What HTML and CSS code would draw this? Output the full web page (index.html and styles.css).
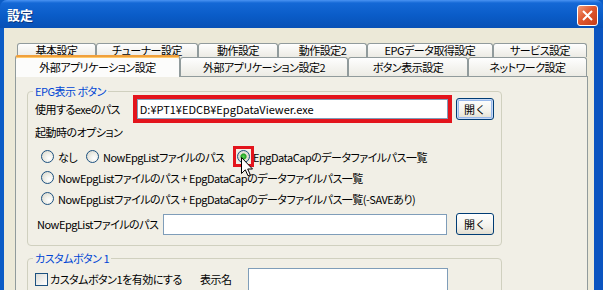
FILE: index.html
```html
<!DOCTYPE html>
<html lang="ja">
<head>
    <meta charset="UTF-8">
    <title>設定</title>
    <link rel="stylesheet" href="styles.css">
</head>
<body>
    <div class="window">
        <div class="titlebar">
            <span class="title">設定</span>
            <span class="close">
                <svg width="11" height="11" viewBox="0 0 11 11"><path d="M1 1L10 10M10 1L1 10" stroke="#fff" stroke-width="2" fill="none"/></svg>
            </span>
        </div>
        <div class="client">
            <div class="tabrow back">
                <div class="tab w-kihon">基本設定</div>
                <div class="tab w-tuner">チューナー設定</div>
                <div class="tab w-dosa">動作設定</div>
                <div class="tab w-dosa2">動作設定2</div>
                <div class="tab w-epg">EPGデータ取得設定</div>
                <div class="tab w-service">サービス設定</div>
            </div>
            <div class="tabrow front">
                <div class="tab selected w-ext">外部アプリケーション設定</div>
                <div class="tab w-ext2">外部アプリケーション設定2</div>
                <div class="tab w-button">ボタン表示設定</div>
                <div class="tab w-network">ネットワーク設定</div>
            </div>
            <div class="panel">
                <div class="group">
                    <div class="group-title">EPG表示 ボタン</div>
                    <div class="path-row">
                        <span class="exe-label">使用するexeのパス</span>
                        <div class="highlight"><div class="textbox path-box">D:¥PT1¥EDCB¥EpgDataViewer.exe</div></div>
                        <button class="btn focused">開く</button>
                    </div>
                    <div class="caption">起動時のオプション</div>
                    <div class="options">
                        <div class="opt-row">
                            <label class="opt opt-none"><span class="radio"></span>なし</label>
                            <label class="opt opt-now"><span class="radio"></span>NowEpgListファイルのパス</label>
                            <label class="opt"><span class="mark"><span class="radio checked"></span>
                                <svg class="cursor" width="13" height="20" viewBox="0 0 13 20"><path d="M0.5 0.5L0.5 16.5L4.3 12.8L7 18.8L9.3 17.8L6.7 12L11.5 12Z" fill="#fff" stroke="#000" stroke-width="1"/></svg>
                            </span>EpgDataCapのデータファイルパス一覧</label>
                        </div>
                        <div class="opt-row">
                            <label class="opt"><span class="radio"></span>NowEpgListファイルのパス + EpgDataCapのデータファイルパス一覧</label>
                        </div>
                        <div class="opt-row">
                            <label class="opt"><span class="radio"></span>NowEpgListファイルのパス + EpgDataCapのデータファイルパス一覧(-SAVEあり)</label>
                        </div>
                    </div>
                    <div class="now-row">
                        <span class="now-label">NowEpgListファイルのパス</span>
                        <div class="textbox now-box"></div>
                        <button class="btn now-btn">開く</button>
                    </div>
                </div>
                <div class="group second">
                    <div class="group-title">カスタムボタン 1</div>
                    <div class="custom-row">
                        <label class="check-label"><span class="checkbox"></span>カスタムボタン1を有効にする</label>
                        <span class="name-label">表示名</span>
                        <div class="textbox name-box"></div>
                    </div>
                </div>
            </div>
        </div>
    </div>
</body>
</html>
```

FILE: styles.css
```css
body {
    margin: 0;
    font-family: "Noto Sans CJK JP", sans-serif;
    font-size: 11px;
    letter-spacing: -0.5px;
    font-feature-settings: "palt";
    color: #000;
}
.window {
    width: 603px;
    height: 290px;
    overflow: hidden;
    background: #0b5cc6;
}
.titlebar {
    height: 28px;
    box-sizing: border-box;
    display: flex;
    align-items: flex-start;
    justify-content: space-between;
    padding: 0 5px 0 7px;
    border-radius: 7px 7px 0 0;
    background: linear-gradient(#4a93f2 0, #1468d6 3px, #0a5cc8 55%, #0851b6 100%);
}
.title {
    margin-top: 7px;
    color: #fff;
    font-weight: bold;
    font-size: 13px;
    letter-spacing: 0;
    line-height: 16px;
    text-shadow: 1px 1px 0 #0a3680;
}
.close {
    margin-top: 5px;
    width: 21px;
    height: 21px;
    box-sizing: border-box;
    border: 1px solid #fff;
    border-radius: 3px;
    background: linear-gradient(135deg, #f09a78 0, #e0582e 45%, #c63d18 100%);
    display: flex;
    align-items: center;
    justify-content: center;
}
.client {
    height: 262px;
    box-sizing: border-box;
    border-left: 4px solid #0b5cc6;
    border-right: 9px solid #0a54c0;
    background: #ece9d8;
    padding: 16px 6px 0 11px;
}

/* tabs */
.tabrow {
    display: flex;
    align-items: flex-end;
}
.back {
    height: 13px;
    margin-left: 2px;
}
.front {
    height: 19px;
}
.tab {
    flex: none;
    box-sizing: border-box;
    border: 1px solid #919b9c;
    border-bottom: 0;
    border-radius: 3px 3px 0 0;
    background: linear-gradient(#fefefe, #ecebe4);
    text-align: center;
    white-space: nowrap;
}
.back .tab {
    height: 14px;
    line-height: 13px;
}
.front .tab {
    height: 19px;
    line-height: 18px;
}
.front .tab.selected {
    position: relative;
    height: 22px;
    line-height: 20px;
    margin-bottom: -1px;
    border-top: 2px solid #f0a03c;
    box-shadow: inset 0 1px 0 #ffc96a;
    background: #fcfcfb;
}
.w-kihon { width: 79px; }
.w-tuner { width: 102px; }
.w-dosa { width: 80px; }
.w-dosa2 { width: 89px; }
.w-epg { width: 126px; }
.w-service { width: 94px; }
.w-ext { width: 165px; }
.w-ext2 { width: 168px; }
.w-button { width: 120px; }
.w-network { width: 119px; }

.panel {
    height: 240px;
    box-sizing: border-box;
    border: 1px solid #919b9c;
    background: #f1efe6;
    padding: 14px 0 0 11px;
}

/* group boxes */
.group {
    width: 475px;
    box-sizing: border-box;
    border: 1px solid #d0d0bf;
    border-radius: 4px;
    padding: 0 7px 9px 7px;
}
.group.second {
    margin-top: 12px;
    height: 80px;
}
.group-title {
    width: fit-content;
    height: 12px;
    line-height: 12px;
    margin: -7px 0 -2px -2px;
    padding: 0 2px;
    background: #f1efe6;
    color: #0046d5;
    white-space: nowrap;
}

.path-row, .now-row, .custom-row, .opt-row {
    display: flex;
    align-items: center;
    white-space: nowrap;
}
.path-row {
    height: 28px;
}
.exe-label {
    width: 98px;
}
.highlight {
    width: 320px;
    height: 28px;
    box-sizing: border-box;
    border: 4px solid #e3141c;
}
.textbox {
    box-sizing: border-box;
    border: 1px solid #7f9db9;
    background: #fff;
    padding-left: 2px;
    line-height: 18px;
}
.highlight .textbox {
    height: 100%;
}
.path-box {
    letter-spacing: 0;
}
.btn {
    width: 38px;
    height: 22px;
    margin-left: 4px;
    padding: 0;
    box-sizing: border-box;
    border: 1px solid #003c74;
    border-radius: 3px;
    background: linear-gradient(#ffffff, #f3f2ec 60%, #e2ded0);
    font-family: inherit;
    font-size: 11px;
    color: #000;
}
.btn.focused {
    box-shadow: inset 0 0 0 1px #c6d9f6, inset 0 0 0 2px #98b8ea;
}
.caption {
    line-height: 18px;
}
.options {
    margin-top: 5px;
}
.opt-row {
    height: 21px;
}
.opt {
    display: flex;
    align-items: center;
}
.opt-none { width: 45px; }
.opt-now { width: 151px; }
.radio {
    width: 13px;
    height: 13px;
    box-sizing: border-box;
    margin: 0 4px 0 6px;
    border: 1px solid #1c5180;
    border-radius: 50%;
    background: radial-gradient(circle at 65% 65%, #fff 0, #f0f0ea 40%, #d6d3c6 100%);
}
.radio.checked {
    margin: 0;
    background: radial-gradient(circle, #5fd45a 0, #21a121 2.5px, #e4e2d8 3.6px, #d0cdc0 100%);
}
.mark {
    position: relative;
    display: flex;
    margin: 0 3px 0 6px;
    outline: 3px solid #e3141c;
    outline-offset: 1px;
}
.cursor {
    position: absolute;
    left: 4px;
    top: 7px;
}
.now-row {
    height: 24px;
    margin-top: 3px;
}
.now-label {
    width: 126px;
    margin-left: 2px;
}
.now-box {
    width: 285px;
    height: 21px;
}
.now-btn {
    margin-left: 9px;
}
.custom-row {
    height: 22px;
    margin-top: 6px;
    align-items: flex-start;
}
.check-label {
    width: 165px;
    display: flex;
    align-items: center;
    height: 22px;
}
.checkbox {
    width: 13px;
    height: 13px;
    box-sizing: border-box;
    margin-right: 2px;
    border: 1px solid #1c5180;
    background: linear-gradient(135deg, #dcdcd7, #fff);
}
.name-label {
    width: 48px;
    line-height: 22px;
}
.name-box {
    width: 200px;
    height: 30px;
}
```
